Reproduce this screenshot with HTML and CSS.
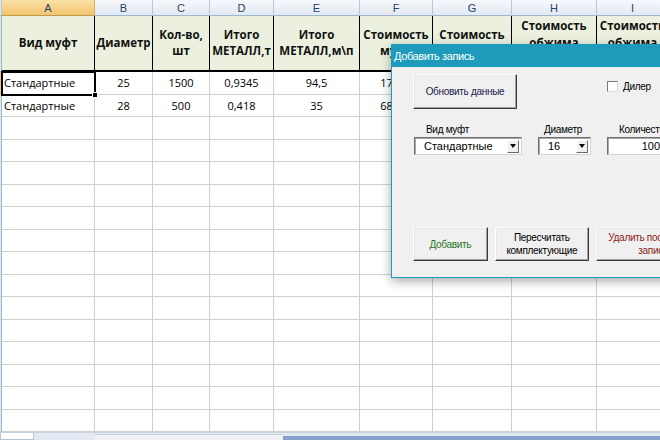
FILE: index.html
```html
<!DOCTYPE html>
<html lang="ru">
<head>
<meta charset="utf-8">
<title>Добавить запись</title>
<link rel="stylesheet" href="styles.css">
</head>
<body>
<div class="screen">
  <div class="sheet">
    <div class="row colhead">
      <div class="c rh"></div>
      <div class="c sel">A</div>
      <div class="c">B</div>
      <div class="c">C</div>
      <div class="c">D</div>
      <div class="c">E</div>
      <div class="c">F</div>
      <div class="c">G</div>
      <div class="c">H</div>
      <div class="c">I</div>
    </div>
    <div class="row hdr">
      <div class="c rh"></div>
      <div class="c">Вид муфт</div>
      <div class="c">Диаметр</div>
      <div class="c">Кол-во,<br>шт</div>
      <div class="c">Итого<br>МЕТАЛЛ,т</div>
      <div class="c">Итого<br>МЕТАЛЛ,м\п</div>
      <div class="c">Стоимость<br>муфт</div>
      <div class="c">Стоимость<br>компл.</div>
      <div class="c">Стоимость<br>обжима<br>муфт</div>
      <div class="c">Стоимость<br>обжима<br>муфт</div>
    </div>
    <div class="row data">
      <div class="c rh rsel"></div>
      <div class="c txt active">Стандартные<span class="handle"></span></div>
      <div class="c">25</div>
      <div class="c">1500</div>
      <div class="c">0,9345</div>
      <div class="c">94,5</div>
      <div class="c">17325</div>
      <div class="c"></div>
      <div class="c"></div>
      <div class="c"></div>
    </div>
    <div class="row data">
      <div class="c rh"></div>
      <div class="c txt">Стандартные</div>
      <div class="c">28</div>
      <div class="c">500</div>
      <div class="c">0,418</div>
      <div class="c">35</div>
      <div class="c">68040</div>
      <div class="c"></div>
      <div class="c"></div>
      <div class="c"></div>
    </div>
    <div class="row data"><div class="c rh"></div><div class="c"></div><div class="c"></div><div class="c"></div><div class="c"></div><div class="c"></div><div class="c"></div><div class="c"></div><div class="c"></div><div class="c"></div></div>
    <div class="row data"><div class="c rh"></div><div class="c"></div><div class="c"></div><div class="c"></div><div class="c"></div><div class="c"></div><div class="c"></div><div class="c"></div><div class="c"></div><div class="c"></div></div>
    <div class="row data"><div class="c rh"></div><div class="c"></div><div class="c"></div><div class="c"></div><div class="c"></div><div class="c"></div><div class="c"></div><div class="c"></div><div class="c"></div><div class="c"></div></div>
    <div class="row data"><div class="c rh"></div><div class="c"></div><div class="c"></div><div class="c"></div><div class="c"></div><div class="c"></div><div class="c"></div><div class="c"></div><div class="c"></div><div class="c"></div></div>
    <div class="row data"><div class="c rh"></div><div class="c"></div><div class="c"></div><div class="c"></div><div class="c"></div><div class="c"></div><div class="c"></div><div class="c"></div><div class="c"></div><div class="c"></div></div>
    <div class="row data"><div class="c rh"></div><div class="c"></div><div class="c"></div><div class="c"></div><div class="c"></div><div class="c"></div><div class="c"></div><div class="c"></div><div class="c"></div><div class="c"></div></div>
    <div class="row data"><div class="c rh"></div><div class="c"></div><div class="c"></div><div class="c"></div><div class="c"></div><div class="c"></div><div class="c"></div><div class="c"></div><div class="c"></div><div class="c"></div></div>
    <div class="row data"><div class="c rh"></div><div class="c"></div><div class="c"></div><div class="c"></div><div class="c"></div><div class="c"></div><div class="c"></div><div class="c"></div><div class="c"></div><div class="c"></div></div>
    <div class="row data"><div class="c rh"></div><div class="c"></div><div class="c"></div><div class="c"></div><div class="c"></div><div class="c"></div><div class="c"></div><div class="c"></div><div class="c"></div><div class="c"></div></div>
    <div class="row data"><div class="c rh"></div><div class="c"></div><div class="c"></div><div class="c"></div><div class="c"></div><div class="c"></div><div class="c"></div><div class="c"></div><div class="c"></div><div class="c"></div></div>
    <div class="row data"><div class="c rh"></div><div class="c"></div><div class="c"></div><div class="c"></div><div class="c"></div><div class="c"></div><div class="c"></div><div class="c"></div><div class="c"></div><div class="c"></div></div>
    <div class="row data"><div class="c rh"></div><div class="c"></div><div class="c"></div><div class="c"></div><div class="c"></div><div class="c"></div><div class="c"></div><div class="c"></div><div class="c"></div><div class="c"></div></div>
    <div class="row data"><div class="c rh"></div><div class="c"></div><div class="c"></div><div class="c"></div><div class="c"></div><div class="c"></div><div class="c"></div><div class="c"></div><div class="c"></div><div class="c"></div></div>
    <div class="row data"><div class="c rh"></div><div class="c"></div><div class="c"></div><div class="c"></div><div class="c"></div><div class="c"></div><div class="c"></div><div class="c"></div><div class="c"></div><div class="c"></div></div>
  </div>
  <div class="tabs">
    <div class="tab"></div>
    <div class="tabgap"></div>
    <div class="nav"></div>
    <div class="hscroll"></div>
  </div>

  <div class="dialog">
    <div class="title">Добавить запись</div>
    <div class="body">
      <div class="top">
        <div class="btn refresh">Обновить данные</div>
        <div class="check"><span class="box"></span><span>Дилер</span></div>
      </div>
      <div class="fields">
        <div class="field f1">
          <span class="lbl">Вид муфт</span>
          <div class="combo">
            <span class="val">Стандартные</span>
            <span class="dd"><i class="arrow"></i></span>
          </div>
        </div>
        <div class="field f2">
          <span class="lbl">Диаметр</span>
          <div class="combo">
            <span class="val">16</span>
            <span class="dd"><i class="arrow"></i></span>
          </div>
        </div>
        <div class="field f3">
          <span class="lbl">Количество</span>
          <div class="combo textbox">
            <span class="val">100</span>
          </div>
        </div>
      </div>
      <div class="actions">
        <div class="btn add">Добавить</div>
        <div class="btn recalc">Пересчитать<br>комплектующие</div>
        <div class="btn del">Удалить последнюю<br>запись</div>
      </div>
    </div>
  </div>
</div>
</body>
</html>
```

FILE: styles.css
```css
* { box-sizing: border-box; }
html, body { margin: 0; padding: 0; background: #fff; }

.screen {
  position: relative;
  width: 660px;
  height: 440px;
  overflow: hidden;
  background: #fff;
  font-family: "Open Sans", "Liberation Sans", sans-serif;
  color: #000;
}

.sheet { display: flex; flex-direction: column; width: 700px; }

.row {
  display: grid;
  grid-template-columns: 2px 93px 58px 57px 64px 86px 73px 79px 85px 72px 40px;
}

.c {
  display: flex;
  align-items: center;
  justify-content: center;
  text-align: center;
  white-space: nowrap;
  border-right: 1px solid #d0d0d0;
  border-bottom: 1px solid #d0d0d0;
  position: relative;
}

.c.rh {
  background: #dfe7f2;
  border-right: 1px solid #9eb6ce;
}
.c.rh.rsel { background: #f4c66f; }

/* column letters */
.colhead { height: 16px; }
.colhead .c {
  background: linear-gradient(#f6f9fc, #e2e9f3);
  border-right: 1px solid #b7c8dc;
  border-bottom: 1px solid #9eb6ce;
  font-size: 11px;
  color: #27415f;
  font-family: "Liberation Sans", sans-serif;
}
.colhead .c.sel {
  background: linear-gradient(#fae1a8, #f3c56e);
  border-right-color: #d9ad62;
  border-bottom-color: #c29a4f;
}
.colhead .c.rh { background: #dfe7f2; }

/* header row */
.hdr { height: 56px; }
.hdr .c {
  background: #ebf1de;
  border-right: 1px solid #000;
  border-bottom: 2px solid #000;
  font-weight: 700;
  font-size: 11.5px;
  line-height: 16.5px;
  color: #111;
}
.hdr .c.rh { background: #dfe7f2; border-right-color: #9eb6ce; border-bottom: 1px solid #9eb6ce; }

/* data rows */
.data { height: 22.5px; }
.data .c {
  font-size: 11px;
  color: #000;
}
.data .c.txt { justify-content: flex-start; padding-left: 2px; }
.data .c.active {
  outline: 2px solid #000;
  outline-offset: -1px;
  z-index: 1;
}
.handle {
  position: absolute;
  right: -4px;
  bottom: -4px;
  width: 6px;
  height: 6px;
  background: #000;
  border: 1px solid #fff;
}

/* sheet tabs */
.tabs {
  display: flex;
  align-items: flex-end;
  height: 8px;
  background: #e4e9f1;
  border-top: 1px solid #c9d3e0;
}
.tab {
  width: 34px;
  height: 7px;
  background: #fff;
  border: 1px solid #b9c3d0;
  border-top: none;
}
.tabgap { width: 61px; height: 7px; }
.nav {
  width: 188px;
  height: 6px;
  background: #eef1f6;
  border-top: 1px solid #c6ceda;
}
.hscroll {
  flex: 1;
  height: 4px;
  background: #86a2cb;
}

/* dialog */
.dialog {
  position: absolute;
  left: 391px;
  top: 44px;
  width: 320px;
  height: 234px;
  border: 1px solid #1e9bbb;
  background: #f0f0f0;
  box-shadow: 0 3px 10px rgba(0, 0, 0, 0.35);
  font-family: "Liberation Sans", sans-serif;
  font-size: 10px;
  letter-spacing: -0.3px;
  color: #000;
  display: flex;
  flex-direction: column;
}
.title {
  height: 22px;
  background: #1e9bbb;
  color: #fff;
  font-size: 11px;
  letter-spacing: -0.4px;
  line-height: 22px;
  padding-left: 2px;
}
.body {
  padding: 7px 0 0 21px;
  display: flex;
  flex-direction: column;
}

.btn {
  display: flex;
  align-items: center;
  justify-content: center;
  text-align: center;
  line-height: 13px;
  background: #f0f0f0;
  border: 1px solid;
  border-color: #ffffff #3c3c3c #3c3c3c #ffffff;
  box-shadow: inset -1px -1px 0 #a0a0a0, inset 1px 1px 0 #e6e6e6;
  white-space: nowrap;
}

.top { display: flex; align-items: flex-start; }
.refresh { width: 104px; height: 35px; color: #1b1b4d; }
.check {
  display: flex;
  align-items: center;
  gap: 5px;
  margin-left: 90px;
  margin-top: 7px;
}
.box {
  width: 11px;
  height: 11px;
  background: #fff;
  border: 1px solid;
  border-color: #7a7a7a #dcdcdc #dcdcdc #7a7a7a;
}

.fields {
  display: flex;
  margin-top: 14px;
}
.field { display: flex; flex-direction: column; }
.lbl { line-height: 13px; height: 14px; }
.f1 { margin-left: 1px; }
.f1 .lbl { padding-left: 12px; }
.f1 .combo { width: 108px; }
.f2 { margin-left: 16px; }
.f2 .lbl { padding-left: 6px; }
.f2 .combo { width: 53px; }
.f3 { margin-left: 16px; }
.f3 .lbl { padding-left: 12px; }
.f3 .combo { width: 56px; justify-content: flex-end; padding-right: 2px; }

.combo {
  height: 18px;
  display: flex;
  align-items: center;
  background: #fff;
  border: 1px solid;
  border-color: #6e6e6e #d4d4d4 #d4d4d4 #6e6e6e;
  box-shadow: inset 1px 1px 0 #a8a8a8;
  font-size: 11px;
  letter-spacing: 0;
  padding-left: 9px;
}
.combo .val { flex: 1; }
.combo.textbox .val { flex: none; }
.dd {
  width: 12px;
  height: 13px;
  margin-right: 2px;
  display: flex;
  align-items: center;
  justify-content: center;
  background: #f0f0f0;
  border: 1px solid;
  border-color: #ffffff #6a6a6a #6a6a6a #ffffff;
}
.arrow {
  width: 0;
  height: 0;
  border-left: 3.5px solid transparent;
  border-right: 3.5px solid transparent;
  border-top: 4px solid #000;
}

.actions {
  display: flex;
  gap: 7px;
  margin-top: 72px;
}
.actions .btn { height: 34px; }
.add { width: 76px; color: #1f7a1f; }
.recalc { width: 96px; color: #000; }
.del { width: 116px; color: #8b1c1c; }
```
